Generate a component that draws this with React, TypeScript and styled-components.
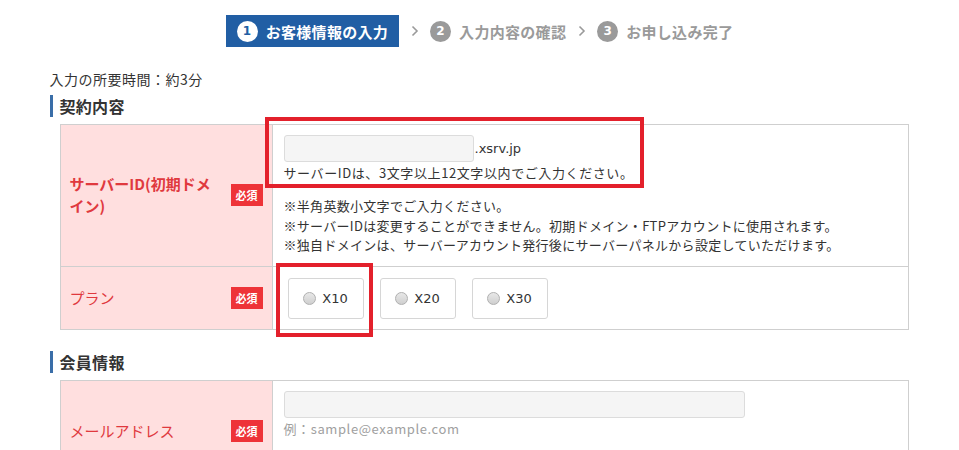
import styled, { createGlobalStyle } from 'styled-components'

const GlobalStyle = createGlobalStyle`
	html, body {
		margin: 0;
		padding: 0;
		background: #fff;
	}
	body {
		font-family: "DejaVu Sans", "Noto Sans CJK JP", sans-serif;
		color: #333;
	}
`

const JP = `"Noto Sans CJK JP", "DejaVu Sans", sans-serif`

// * Steps :
const StepBar = styled.ol`
	margin: 0;
	padding: 15px 0 0;
	list-style: none;
	display: flex;
	align-items: center;
	justify-content: center;
`

const Step = styled.li<{ $active?: boolean }>`
	height: 32px;
	display: flex;
	align-items: center;
	gap: 8px;
	padding: ${(p) => (p.$active ? '0 11px 0 11px' : '0')};
	background: ${(p) => (p.$active ? '#215ea4' : 'transparent')};
	color: ${(p) => (p.$active ? '#fff' : '#9a9a9a')};
	font-family: ${JP};
	font-size: 15px;
	font-weight: 700;
	letter-spacing: 0.3px;
`

const StepNum = styled.span<{ $active?: boolean }>`
	width: 21px;
	height: 21px;
	border-radius: 50%;
	display: flex;
	align-items: center;
	justify-content: center;
	font-family: "DejaVu Sans", sans-serif;
	font-size: 12px;
	font-weight: 700;
	background: ${(p) => (p.$active ? '#fff' : '#9a9a9a')};
	color: ${(p) => (p.$active ? '#215ea4' : '#fff')};
`

const Chevron = styled.span`
	width: 31px;
	display: flex;
	justify-content: center;
`

// * Page :
const Page = styled.main`
	width: 860px;
	margin: 0 auto;
	padding-top: 22px;
`

const Duration = styled.p`
	margin: 0;
	font-family: ${JP};
	font-size: 14px;
	letter-spacing: 0.5px;
	line-height: 20px;
	color: #333;
`

const SectionTitle = styled.h2<{ $top?: number }>`
	margin: ${(p) => p.$top ?? 6}px 0 7px;
	padding-left: 7px;
	border-left: 3px solid #3a6ea8;
	font-family: ${JP};
	font-size: 16px;
	font-weight: 700;
	letter-spacing: 0.3px;
	line-height: 22px;
	color: #333;
`

const Table = styled.div`
	margin-left: 10px;
	width: 849px;
	border: 1px solid #cfcfcf;
	box-sizing: border-box;
`

const Row = styled.div<{ $minHeight?: number }>`
	display: grid;
	grid-template-columns: 212px 1fr;
	min-height: ${(p) => p.$minHeight ?? 0}px;
	& + & {
		border-top: 1px solid #cfcfcf;
	}
`

const Label = styled.div`
	display: flex;
	align-items: center;
	justify-content: space-between;
	gap: 8px;
	padding: 0 9px;
	background: #ffdfdf;
	border-right: 1px solid #cfcfcf;
`

const LabelText = styled.span<{ $bold?: boolean }>`
	max-width: 152px;
	font-family: ${JP};
	font-size: 15px;
	line-height: 22px;
	font-weight: ${(p) => (p.$bold ? 700 : 400)};
	color: #e0393e;
`

const Badge = styled.span`
	flex: none;
	width: 32px;
	height: 22px;
	display: flex;
	align-items: center;
	justify-content: center;
	background: #ee3338;
	color: #fff;
	font-family: ${JP};
	font-size: 11px;
	font-weight: 700;
`

const Cell = styled.div`
	position: relative;
	padding: 10px 11px 11px;
	font-family: ${JP};
`

const InputLine = styled.div`
	display: flex;
	align-items: flex-end;
	gap: 1px;
`

const TextInput = styled.input<{ $width: number }>`
	display: block;
	width: ${(p) => p.$width}px;
	height: 27px;
	box-sizing: border-box;
	border: 1px solid #dcdcdc;
	border-radius: 3px;
	background: #f5f5f5;
	outline: none;
`

const Domain = styled.span`
	font-family: "DejaVu Sans", sans-serif;
	font-size: 13px;
	line-height: 20px;
	padding-bottom: 3px;
	color: #333;
`

const Help = styled.p<{ $muted?: boolean }>`
	margin: 1px 0 0;
	font-size: 13px;
	letter-spacing: 0.6px;
	line-height: 20px;
	color: ${(p) => (p.$muted ? '#a0a0a0' : '#333')};
`

const Notes = styled.ul`
	margin: 13px 0 0;
	padding: 0;
	list-style: none;
	font-size: 13px;
	letter-spacing: 0.3px;
	line-height: 19.5px;
	color: #333;
`

const Plans = styled.div`
	display: flex;
	gap: 16px;
	padding: 0 4px;
`

const PlanButton = styled.label`
	width: 76px;
	height: 41px;
	box-sizing: border-box;
	border: 1px solid #d6d6d6;
	border-radius: 3px;
	display: flex;
	align-items: center;
	justify-content: center;
	gap: 6px;
	font-family: "DejaVu Sans", sans-serif;
	font-size: 13px;
	color: #333;
	background: #fff;
`

const RadioDot = styled.span`
	width: 11px;
	height: 11px;
	border-radius: 50%;
	border: 1px solid #b0b0b0;
	background: linear-gradient(#e8e8e8, #cfcfcf);
`

const Highlight = styled.span<{ $l: number; $t: number; $w: number; $h: number }>`
	position: absolute;
	left: ${(p) => p.$l}px;
	top: ${(p) => p.$t}px;
	width: ${(p) => p.$w}px;
	height: ${(p) => p.$h}px;
	box-sizing: border-box;
	border: 4px solid #e3202b;
	pointer-events: none;
`

const PlanCell = styled(Cell)`
	padding: 11px 11px 10px;
`

const steps = ['お客様情報の入力', '入力内容の確認', 'お申し込み完了']

const ChevronIcon = () => (
	<svg width="8" height="12" viewBox="0 0 8 12">
		<path d="M1.5 1.5 L6 6 L1.5 10.5" fill="none" stroke="#9a9a9a" strokeWidth="1.6" />
	</svg>
)

const App = () => {
	return (
		<>
			<GlobalStyle />
			<StepBar>
				{steps.map((s, i) => (
					<>
						{i > 0 && (
							<Chevron key={`c${i}`}>
								<ChevronIcon />
							</Chevron>
						)}
						<Step key={s} $active={i === 0}>
							<StepNum $active={i === 0}>{i + 1}</StepNum>
							{s}
						</Step>
					</>
				))}
			</StepBar>
			<Page>
				<Duration>入力の所要時間：約3分</Duration>
				<SectionTitle>契約内容</SectionTitle>
				<Table>
					<Row>
						<Label>
							<LabelText $bold>サーバーID(初期ドメイン)</LabelText>
							<Badge>必須</Badge>
						</Label>
						<Cell>
							<Highlight $l={-8} $t={-8} $w={379} $h={71} />
							<InputLine>
								<TextInput $width={190} />
								<Domain>.xsrv.jp</Domain>
							</InputLine>
							<Help>サーバーIDは、3文字以上12文字以内でご入力ください。</Help>
							<Notes>
								<li>※半角英数小文字でご入力ください。</li>
								<li>※サーバーIDは変更することができません。初期ドメイン・FTPアカウントに使用されます。</li>
								<li>※独自ドメインは、サーバーアカウント発行後にサーバーパネルから設定していただけます。</li>
							</Notes>
						</Cell>
					</Row>
					<Row>
						<Label>
							<LabelText>プラン</LabelText>
							<Badge>必須</Badge>
						</Label>
						<PlanCell>
							<Highlight $l={3} $t={-4} $w={97} $h={74} />
							<Plans>
								{['X10', 'X20', 'X30'].map((p) => (
									<PlanButton key={p}>
										<RadioDot />
										{p}
									</PlanButton>
								))}
							</Plans>
						</PlanCell>
					</Row>
				</Table>
				<SectionTitle $top={21}>会員情報</SectionTitle>
				<Table>
					<Row $minHeight={100}>
						<Label>
							<LabelText>メールアドレス</LabelText>
							<Badge>必須</Badge>
						</Label>
						<Cell>
							<TextInput $width={461} />
							<Help $muted>例：sample@example.com</Help>
						</Cell>
					</Row>
				</Table>
			</Page>
		</>
	)
}

export default App
